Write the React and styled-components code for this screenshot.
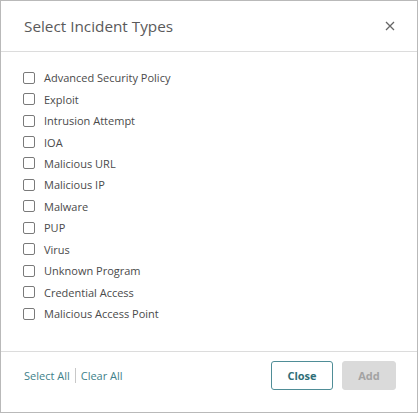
import React, { useState } from "react";
import styled, { createGlobalStyle } from "styled-components";

const GlobalStyle = createGlobalStyle`
  * { box-sizing: border-box; }
  body {
    margin: 0;
    background: #fff;
    font-family: "Open Sans", "Noto Sans", sans-serif;
  }
`;

const types = [
  "Advanced Security Policy",
  "Exploit",
  "Intrusion Attempt",
  "IOA",
  "Malicious URL",
  "Malicious IP",
  "Malware",
  "PUP",
  "Virus",
  "Unknown Program",
  "Credential Access",
  "Malicious Access Point",
];

const App = () => {
  const [checked, setChecked] = useState({});

  const toggle = (name) => {
    setChecked({ ...checked, [name]: !checked[name] });
  };

  const selectAll = () => {
    const all = {};
    types.forEach((t) => (all[t] = true));
    setChecked(all);
  };

  const anyChecked = Object.values(checked).some((v) => v);

  return (
    <>
      <GlobalStyle />
      <Dialog>
        <Header>
          <Title>Select Incident Types</Title>
          <CloseIcon aria-label="close">
            <svg width="10" height="10" viewBox="0 0 10 10">
              <path d="M1 1L9 9M9 1L1 9" stroke="#666" strokeWidth="1.3" />
            </svg>
          </CloseIcon>
        </Header>
        <Body>
          {types.map((t) => (
            <Row key={t}>
              <Box
                type="checkbox"
                checked={!!checked[t]}
                onChange={() => toggle(t)}
              />
              <span>{t}</span>
            </Row>
          ))}
        </Body>
        <Footer>
          <Links>
            <LinkBtn onClick={selectAll}>Select All</LinkBtn>
            <Sep />
            <LinkBtn onClick={() => setChecked({})}>Clear All</LinkBtn>
          </Links>
          <Buttons>
            <Button>Close</Button>
            <Button primary disabled={!anyChecked}>
              Add
            </Button>
          </Buttons>
        </Footer>
      </Dialog>
    </>
  );
};

const Dialog = styled.div`
  width: 418px;
  height: 413px;
  border: 1px solid #b9b9b9;
  display: flex;
  flex-direction: column;
  background: #fff;
`;

const Header = styled.div`
  height: 51px;
  flex-shrink: 0;
  border-bottom: 1px solid #dcdcdc;
  display: flex;
  align-items: center;
  justify-content: space-between;
  padding: 0 22px 1px 23px;
`;

const Title = styled.h4`
  margin: 0;
  font-size: 15.3px;
  font-weight: 400;
  color: #5a5a5a;
`;

const CloseIcon = styled.button`
  border: none;
  background: none;
  padding: 0;
  width: 10px;
  height: 10px;
  display: flex;
  cursor: pointer;
`;

const Body = styled.div`
  flex: 1;
  padding: 15px 22px 0;
  display: flex;
  flex-direction: column;
`;

const Row = styled.label`
  height: 21.45px;
  display: flex;
  align-items: center;
  gap: 9px;
  font-size: 11px;
  color: #4a4a4a;
  cursor: pointer;
`;

const Box = styled.input`
  appearance: none;
  margin: 0;
  width: 12px;
  height: 12px;
  border: 1px solid #7a7a7a;
  border-radius: 2px;
  background: #fff;
  cursor: pointer;

  &:checked {
    background: #3e7f8a;
    border-color: #3e7f8a;
  }
`;

const Footer = styled.div`
  height: 61px;
  flex-shrink: 0;
  border-top: 1px solid #dcdcdc;
  display: flex;
  align-items: center;
  justify-content: space-between;
  padding: 0 21px 14px 23px;
`;

const Links = styled.div`
  display: flex;
  align-items: center;
  gap: 5px;
`;

const LinkBtn = styled.button`
  border: none;
  background: none;
  padding: 0;
  font-family: inherit;
  font-size: 11px;
  color: #3e7f8a;
  cursor: pointer;
`;

const Sep = styled.span`
  width: 1px;
  height: 15px;
  background: #c8c8c8;
`;

const Buttons = styled.div`
  display: flex;
  gap: 9px;
`;

const Button = styled.button`
  height: 29px;
  min-width: ${(p) => (p.primary ? "54px" : "62px")};
  padding: 0 12px;
  border-radius: 3px;
  font-family: inherit;
  font-size: 11px;
  font-weight: 700;
  cursor: pointer;
  border: 1px solid ${(p) => (p.primary ? "#3e7f8a" : "#4f8d97")};
  background: ${(p) => (p.primary ? "#3e7f8a" : "#fff")};
  color: ${(p) => (p.primary ? "#fff" : "#2f6e78")};

  &:disabled {
    background: #dadada;
    border-color: #dadada;
    color: #a3a3a3;
    cursor: default;
  }
`;

export default App;
